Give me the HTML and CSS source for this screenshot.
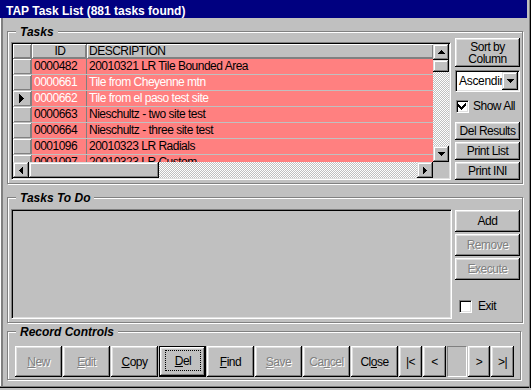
FILE: index.html
```html
<!DOCTYPE html>
<html>
<head>
<meta charset="utf-8">
<title>TAP Task List</title>
<link rel="stylesheet" href="styles.css">
</head>
<body>
<div class="window">
  <div class="titlebar">TAP Task List (881 tasks found)</div>
  <div class="client">
    <section class="group group-tasks">
      <div class="group-title">Tasks</div>
      <div class="tasks-body">
        <div class="grid">
          <div class="grid-main">
            <div class="grid-rows">
              <div class="row header">
                <div class="cell sel hcell"></div>
                <div class="cell id hcell hid">ID</div>
                <div class="cell desc hcell hdesc">DESCRIPTION</div>
              </div>
              <div class="row">
                <div class="cell sel scell"></div>
                <div class="cell id">0000482</div>
                <div class="cell desc">20010321 LR Tile Bounded Area</div>
              </div>
              <div class="row light">
                <div class="cell sel scell"></div>
                <div class="cell id">0000661</div>
                <div class="cell desc">Tile from Cheyenne mtn</div>
              </div>
              <div class="row light">
                <div class="cell sel scell"><svg class="pointer" width="5" height="9" viewBox="0 0 5 9"><path d="M0 0h1v1h1v1h1v1h1v1h1v1H4v1H3v1H2v1H1v1H0z"/></svg></div>
                <div class="cell id">0000662</div>
                <div class="cell desc">Tile from el paso test site</div>
              </div>
              <div class="row">
                <div class="cell sel scell"></div>
                <div class="cell id">0000663</div>
                <div class="cell desc">Nieschultz - two site test</div>
              </div>
              <div class="row">
                <div class="cell sel scell"></div>
                <div class="cell id">0000664</div>
                <div class="cell desc">Nieschultz - three site test</div>
              </div>
              <div class="row">
                <div class="cell sel scell"></div>
                <div class="cell id">0001096</div>
                <div class="cell desc">20010323 LR Radials</div>
              </div>
              <div class="row">
                <div class="cell sel scell"></div>
                <div class="cell id">0001097</div>
                <div class="cell desc">20010323 LR Custom</div>
              </div>
            </div>
            <div class="hscroll">
              <div class="sb-btn"><svg width="4" height="7" viewBox="0 0 4 7"><path d="M3 0h1v7H3V6H2V5H1V4H0V3h1V2h1V1h1z"/></svg></div>
              <div class="hthumb"></div>
              <div class="track"></div>
              <div class="sb-btn"><svg width="4" height="7" viewBox="0 0 4 7"><path d="M0 0h1v1h1v1h1v1h1v1H3v1H2v1H1v1H0z"/></svg></div>
            </div>
          </div>
          <div class="vcol">
            <div class="vscroll">
              <div class="sb-btn"><svg width="7" height="4" viewBox="0 0 7 4"><path d="M3 0h1v1h1v1h1v1h1v1H0V3h1V2h1V1h1z"/></svg></div>
              <div class="vthumb"></div>
              <div class="track"></div>
              <div class="sb-btn"><svg width="7" height="4" viewBox="0 0 7 4"><path d="M0 0h7v1H6v1H5v1H4v1H3V3H2V2H1V1H0z"/></svg></div>
            </div>
            <div class="corner"></div>
          </div>
        </div>
        <div class="side">
          <div class="btn btn-sort"><span class="sort-line">Sort by</span><span class="sort-line">Column</span></div>
          <div class="combo">
            <span class="combo-text">Ascending</span>
            <span class="combo-btn"><svg width="7" height="4" viewBox="0 0 7 4"><path d="M0 0h7v1H6v1H5v1H4v1H3V3H2V2H1V1H0z"/></svg></span>
          </div>
          <div class="check-row show-all">
            <span class="check"><svg width="9" height="9" viewBox="0 0 9 9"><path d="M7 1h1v3H7v1H6v1H5v1H4v1H3V7H2V6H1V5H0V2h1v1h1v1h1v1h1V4h1V3h1V2h1z"/></svg></span>
            <span>Show All</span>
          </div>
          <div class="btn btn-sm first">Del Results</div>
          <div class="btn btn-sm">Print List</div>
          <div class="btn btn-sm">Print INI</div>
        </div>
      </div>
    </section>

    <section class="group group-todo">
      <div class="group-title">Tasks To Do</div>
      <div class="todo-body">
        <div class="list"></div>
        <div class="todo-side">
          <div class="btn btn-md add">Add</div>
          <div class="btn btn-md disabled">Remove</div>
          <div class="btn btn-md disabled">Execute</div>
          <div class="check-row exit">
            <span class="check"></span>
            <span>Exit</span>
          </div>
        </div>
      </div>
    </section>

    <section class="group group-rec">
      <div class="group-title">Record Controls</div>
      <div class="rec-body">
        <div class="btn rbtn disabled"><span><u>N</u>ew</span></div>
        <div class="btn rbtn disabled"><span><u>E</u>dit</span></div>
        <div class="btn rbtn"><span><u>C</u>opy</span></div>
        <div class="btn rbtn default"><span class="focus"><u>D</u>el</span></div>
        <div class="btn rbtn"><span><u>F</u>ind</span></div>
        <div class="btn rbtn disabled"><span><u>S</u>ave</span></div>
        <div class="btn rbtn disabled"><span>Ca<u>n</u>cel</span></div>
        <div class="btn rbtn"><span>Cl<u>o</u>se</span></div>
        <div class="btn nav w23">|&lt;</div>
        <div class="btn nav w23">&lt;</div>
        <div class="nav-field"></div>
        <div class="btn nav w22">&gt;</div>
        <div class="btn nav w23">&gt;|</div>
      </div>
    </section>
  </div>
</div>
</body>
</html>
```

FILE: styles.css
```css
* { box-sizing: border-box; }

html, body {
  margin: 0;
  padding: 0;
  background: #c0c0c0;
}

body {
  font-family: "Liberation Sans", Arial, sans-serif;
  font-size: 12px;
  letter-spacing: -0.5px;
  color: #000;
}

.window {
  width: 531px;
  height: 388px;
  display: flex;
  flex-direction: column;
  box-shadow: inset -1px 0 #000, inset -2px 0 #808080, inset 0 -1px #000, inset 0 -2px #808080, inset 1px 0 #fff, inset 3px 0 #808080;
}

.titlebar {
  height: 18px;
  margin-right: 4px;
  background: #000080;
  color: #fff;
  font-weight: bold;
  letter-spacing: 0;
  line-height: 14px;
  padding: 4px 0 0 6px;
  white-space: nowrap;
}

.client {
  display: flex;
  flex-direction: column;
  padding: 13px 0 0 7px;
}

/* group boxes */
.group {
  width: 516px;
  border: 1px solid #808080;
  box-shadow: inset 1px 1px #fff, 1px 1px #fff;
  display: flex;
  flex-direction: column;
}

.group-title {
  align-self: flex-start;
  margin: -6px 0 0 8px;
  padding: 0 4px;
  height: 12px;
  line-height: 12px;
  background: #c0c0c0;
  font-weight: bold;
  font-style: italic;
  letter-spacing: 0;
  white-space: nowrap;
}

.group-tasks { height: 153px; }
.group-todo { height: 126px; margin-top: 13px; }
.group-rec { height: 49px; width: 514px; margin-top: 8px; }

/* buttons */
.btn {
  background: #c0c0c0;
  box-shadow: inset -1px -1px #000, inset 1px 1px #fff, inset -2px -2px #808080, inset 2px 2px #dfdfdf;
  display: flex;
  align-items: center;
  justify-content: center;
  text-align: center;
  white-space: nowrap;
  flex-shrink: 0;
}

.disabled {
  color: #808080;
  text-shadow: 1px 1px #fff;
}

/* tasks */
.tasks-body {
  display: flex;
  gap: 4px;
  padding: 0 2px 0 3px;
}

.grid {
  margin-top: 4px;
  width: 440px;
  height: 138px;
  border: 1px solid;
  border-color: #808080 #fff #fff #808080;
  padding: 1px;
  box-shadow: inset 1px 1px #000, inset -1px -1px #dfdfdf;
  display: flex;
}

.grid-main {
  width: 420px;
  display: flex;
  flex-direction: column;
}

.grid-rows {
  height: 118px;
  overflow: hidden;
}

.row {
  display: flex;
  height: 16px;
  line-height: 15px;
  border-bottom: 1px solid #c0c0c0;
  white-space: nowrap;
}

.row.header {
  height: 15px;
  line-height: 14px;
  border-bottom: 1px solid #808080;
}

.cell {
  height: 100%;
  background: #ff8080;
  border-right: 1px solid #808080;
  overflow: hidden;
}

.row.light .cell { color: #fff; }

.cell.sel { width: 19px; flex-shrink: 0; }
.cell.id { width: 55px; flex-shrink: 0; padding-left: 2px; }
.cell.desc { flex: 1; padding-left: 2px; border-right: 0; }

.hcell, .scell {
  background: #c0c0c0;
  color: #000;
  box-shadow: inset 1px 1px #fff, inset -1px -1px #808080;
}

.scell {
  display: flex;
  align-items: center;
  padding-left: 6px;
}

.hid { text-align: center; padding-left: 0; }
.hdesc { padding-left: 4px; }

.pointer { display: block; }

.track {
  flex: 1;
}

.hscroll, .vscroll {
  background-color: #c0c0c0;
  background-image: repeating-conic-gradient(#fff 0 25%, #c0c0c0 0 50%);
  background-size: 2px 2px;
  display: flex;
}

.hscroll { height: 16px; }

.vcol {
  width: 16px;
  display: flex;
  flex-direction: column;
}

.vscroll {
  height: 118px;
  flex-direction: column;
}

.corner { height: 16px; background: #c0c0c0; }

.sb-btn, .hthumb, .vthumb, .combo-btn {
  background: #c0c0c0;
  box-shadow: inset -1px -1px #000, inset 1px 1px #dfdfdf, inset -2px -2px #808080, inset 2px 2px #fff;
  flex-shrink: 0;
}

.sb-btn {
  width: 16px;
  height: 16px;
  display: flex;
  align-items: center;
  justify-content: center;
}

.sb-btn svg, .combo-btn svg, .check svg { display: block; }

.hthumb { width: 130px; height: 16px; }
.vthumb { width: 16px; height: 12px; }

.side {
  width: 65px;
  display: flex;
  flex-direction: column;
}

.btn-sort {
  height: 29px;
  flex-direction: column;
}

.sort-line {
  display: block;
  height: 12px;
  line-height: 12px;
}

.combo {
  margin-top: 3px;
  height: 22px;
  border: 1px solid;
  border-color: #808080 #fff #fff #808080;
  padding: 1px;
  background: #fff;
  box-shadow: inset 1px 1px #000, inset -1px -1px #dfdfdf;
  display: flex;
}

.combo-text {
  flex: 1;
  overflow: hidden;
  white-space: nowrap;
  padding-left: 2px;
  line-height: 18px;
  letter-spacing: -0.3px;
}

.combo-btn {
  width: 16px;
  height: 18px;
  display: flex;
  align-items: center;
  justify-content: center;
}

.check-row {
  display: flex;
  align-items: center;
  height: 13px;
  line-height: 13px;
}

.show-all { margin-top: 8px; padding-left: 1px; gap: 4px; }
.exit { margin-top: 20px; padding-left: 4px; gap: 6px; }

.check {
  width: 13px;
  height: 13px;
  flex-shrink: 0;
  background: #fff;
  border: 1px solid;
  border-color: #808080 #fff #fff #808080;
  box-shadow: inset 1px 1px #000, inset -1px -1px #dfdfdf;
  display: flex;
  align-items: center;
  justify-content: center;
}

.btn-sm { height: 18px; margin-top: 2px; }
.btn-sm.first { margin-top: 9px; }

/* tasks to do */
.todo-body {
  display: flex;
  gap: 3px;
  padding: 5px 2px 0 3px;
}

.list {
  width: 441px;
  height: 110px;
  border: 1px solid;
  border-color: #808080 #fff #fff #808080;
  box-shadow: inset 1px 1px #000, inset -1px -1px #dfdfdf;
  background: #c0c0c0;
}

.todo-side {
  width: 65px;
  display: flex;
  flex-direction: column;
}

.btn-md { height: 22px; margin-top: 2px; }
.btn-md.add { margin-top: 1px; }

/* record controls */
.rec-body {
  display: flex;
  gap: 1px;
  padding: 8px 0 0 7px;
}

.rbtn { width: 47px; height: 31px; }

.rbtn.default {
  border: 1px solid #000;
}

.focus {
  flex: 1;
  align-self: stretch;
  margin: 3px 4px 5px 5px;
  border: 1px dotted #000;
  display: flex;
  align-items: center;
  justify-content: center;
}

.nav { height: 31px; }
.w23 { width: 23px; }
.w22 { width: 22px; }

.nav-field {
  width: 20px;
  height: 31px;
  border: 1px solid;
  border-color: #808080 #fff #fff #808080;
  flex-shrink: 0;
}
```
